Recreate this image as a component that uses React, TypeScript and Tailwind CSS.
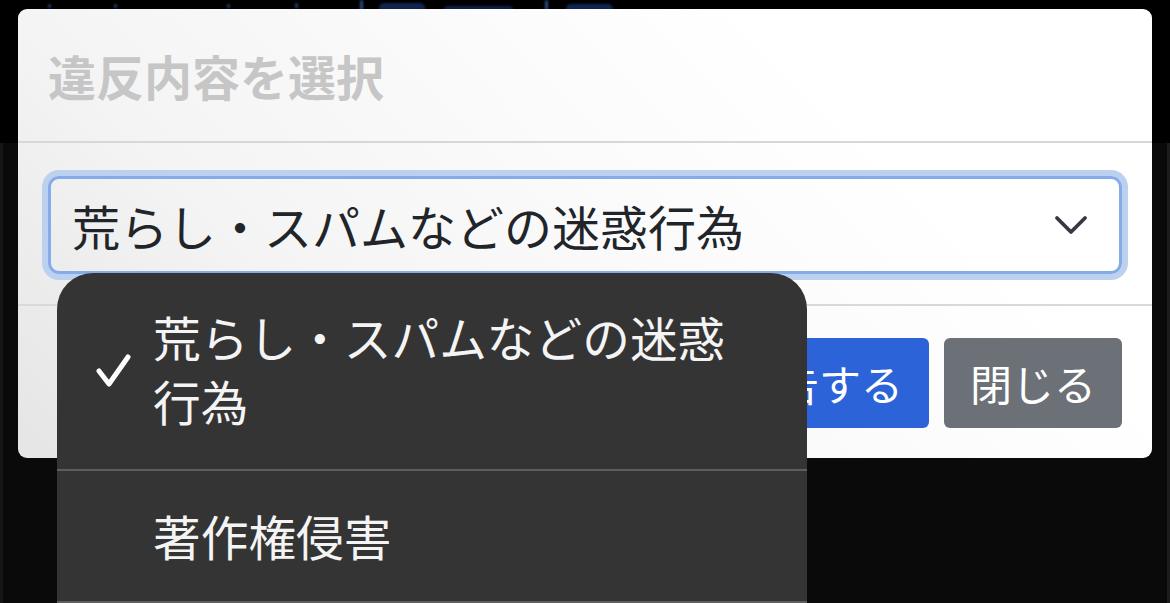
import React from "react";

const font = { fontFamily: '"Noto Sans CJK JP", "Noto Sans", sans-serif' };

export default function App() {
  return (
    <div
      className="relative w-[1170px] h-[603px] overflow-hidden bg-black"
      style={font}
    >
      {/* background page */}
      <div className="flex flex-col h-full">
        <div className="h-[143px] bg-black relative">
          <div className="flex items-start h-[10px] blur-[1.2px]">
            <div className="ml-[48px] mt-[4px] w-[3px] h-[4px] rounded-full bg-[#233f70]" />
            <div className="ml-[63px] mt-[4px] w-[3px] h-[4px] rounded-full bg-[#233f70]" />
            <div className="ml-[110px] mt-[4px] w-[3px] h-[4px] rounded-full bg-[#233f70]" />
            <div className="ml-[65px] mt-[3px] w-[3px] h-[5px] rounded-full bg-[#233f70]" />
            <div className="ml-[62px] mt-0 w-[3px] h-[10px] rounded-full bg-[#2a4a82]" />
            <div className="ml-[16px] mt-[3px] w-[46px] h-[7px] rounded-t-[5px] bg-[#0f2550]" />
            <div className="ml-[19px] mt-[6px] w-[69px] h-[4px] rounded-t-[4px] bg-[#0d2148]" />
            <div className="ml-[32px] mt-0 w-[3px] h-[10px] rounded-full bg-[#2a4a82]" />
            <div className="ml-[18px] mt-[4px] w-[47px] h-[6px] rounded-t-[5px] bg-[#0f2550]" />
          </div>
        </div>
        <div className="flex-1 bg-[#0a0a0a] border-l-[3px] border-l-[#161616] border-r-[3px] border-r-[#1c1c1c]" />
      </div>

      {/* modal */}
      <div className="absolute left-[18px] top-[9px] w-[1134px] h-[449px] rounded-[9px] overflow-hidden bg-[linear-gradient(45deg,#e5e5e5_0%,#f4f4f4_28%,#fbfbfb_55%,#ffffff_75%)] flex flex-col">
        <div className="h-[134px] flex items-center px-[30px] border-b-2 border-[#d6d7d9]">
          <h5 className="text-[48px] font-bold text-[#c6c6c6] leading-none">
            違反内容を選択
          </h5>
        </div>
        <div className="h-[163px] px-[30px] pt-[33px] border-b-2 border-[#d8d9db]">
          <div className="h-[98px] rounded-[11px] border-[3px] border-[#85ace6] shadow-[0_0_0_6px_#bcd0f0] flex items-center pl-[21px] pr-[29px]">
            <span className="flex-1 text-[48px] leading-none text-[#212529]">
              荒らし・スパムなどの迷惑行為
            </span>
            <svg width="34" height="22" viewBox="0 0 34 22" className="mr-[2px]">
              <polyline
                points="3,4 17,18 31,4"
                fill="none"
                stroke="#343a40"
                strokeWidth="3.8"
                strokeLinecap="round"
                strokeLinejoin="round"
              />
            </svg>
          </div>
        </div>
        <div className="flex-1 flex items-start justify-end gap-[15px] px-[30px] pt-[32px]">
          <button className="h-[90px] px-[26px] rounded-[6px] bg-[#2c63d9] text-white text-[42px] leading-none">
            報告する
          </button>
          <button className="h-[90px] px-[26px] rounded-[6px] bg-[#6c7178] text-white text-[42px] leading-none">
            閉じる
          </button>
        </div>
      </div>

      {/* native picker dropdown */}
      <div className="absolute left-[57px] top-[273px] w-[750px] h-[340px] rounded-t-[36px] bg-[#343434] flex flex-col">
        <div className="h-[198px] flex items-center border-b-2 border-[#5e5e5e]">
          <div className="w-[96px] flex justify-end pr-[18px]">
            <svg width="40" height="40" viewBox="0 0 40 40" className="mt-[4px]">
              <polyline
                points="4,18 14,31 33,4"
                fill="none"
                stroke="#ffffff"
                strokeWidth="5"
                strokeLinecap="round"
                strokeLinejoin="round"
              />
            </svg>
          </div>
          <span className="w-[600px] text-[47.7px] leading-[64px] text-[#f4f4f4] mb-[4px]">
            荒らし・スパムなどの迷惑行為
          </span>
        </div>
        <div className="h-[132px] flex items-center border-b-2 border-[#5e5e5e]">
          <span className="pl-[96px] text-[47.7px] leading-none text-[#f4f4f4]">
            著作権侵害
          </span>
        </div>
      </div>
    </div>
  );
}
